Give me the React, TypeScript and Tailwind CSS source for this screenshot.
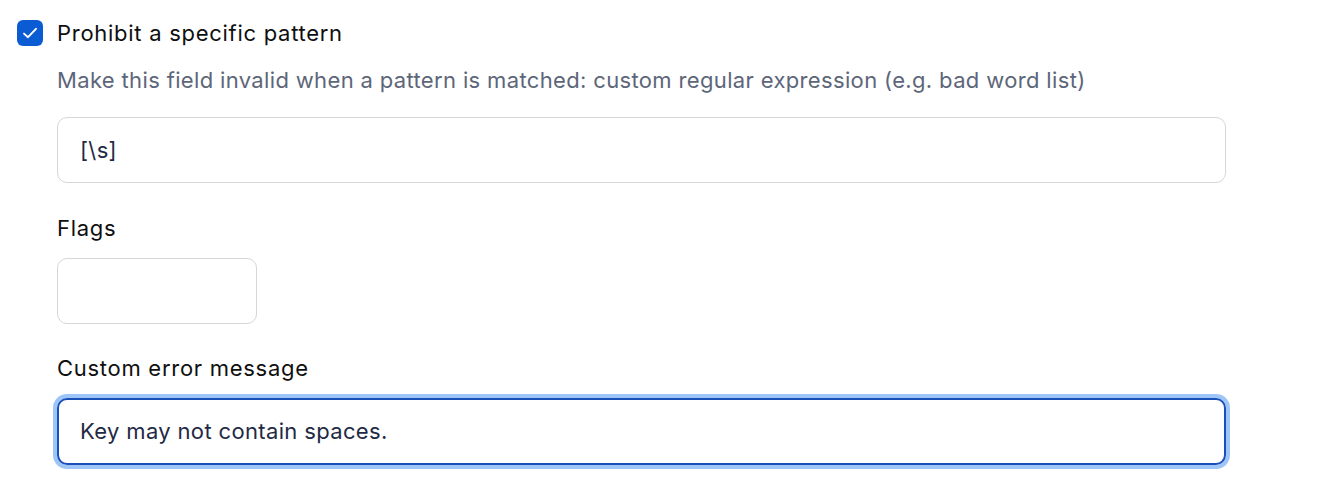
import React from "react";

export default function App() {
  return (
    <div className="w-[1320px] h-[500px] bg-white pl-[17px] pt-[20px] font-['Inter','Liberation_Sans',sans-serif] tracking-[0.35px]">
      <div className="flex items-center h-[26px]">
        <div className="w-[26px] h-[26px] rounded-[6px] bg-[#0b5bd3] flex items-center justify-center">
          <svg width="18" height="18" viewBox="0 0 18 18" fill="none">
            <path d="M3 9.6 L7 13.2 L15 4.8" stroke="white" strokeWidth="1.9" strokeLinecap="round" strokeLinejoin="round" />
          </svg>
        </div>
        <span className="ml-[14px] text-[22px] leading-[26px] tracking-[0.72px] text-[#0f0f0f]">Prohibit a specific pattern</span>
      </div>
      <div className="ml-[40px] flex flex-col">
        <p className="mt-[20px] text-[22px] leading-[28px] text-[#5d6679]">
          Make this field invalid when a pattern is matched: custom regular expression (e.g. bad word list)
        </p>
        <div className="mt-[23px] w-[1169px] h-[66px] rounded-[10px] border border-[#d6d6d6] flex items-center pl-[22px] text-[22px] text-[#1f2a44]">
          [\s]
        </div>
        <p className="mt-[31px] text-[22px] leading-[28px] tracking-[0.72px] text-[#0f0f0f]">Flags</p>
        <div className="mt-[16px] w-[200px] h-[66px] rounded-[10px] border border-[#d6d6d6]" />
        <p className="mt-[30px] text-[22px] leading-[28px] tracking-[0.72px] text-[#0f0f0f]">Custom error message</p>
        <div className="mt-[16px] w-[1169px] h-[67px] rounded-[10px] border-[2px] border-[#1a4fb8] ring-4 ring-[#9ec5f7] flex items-center pl-[21px] text-[22px] text-[#1f2a44]">
          Key may not contain spaces.
        </div>
      </div>
    </div>
  );
}
